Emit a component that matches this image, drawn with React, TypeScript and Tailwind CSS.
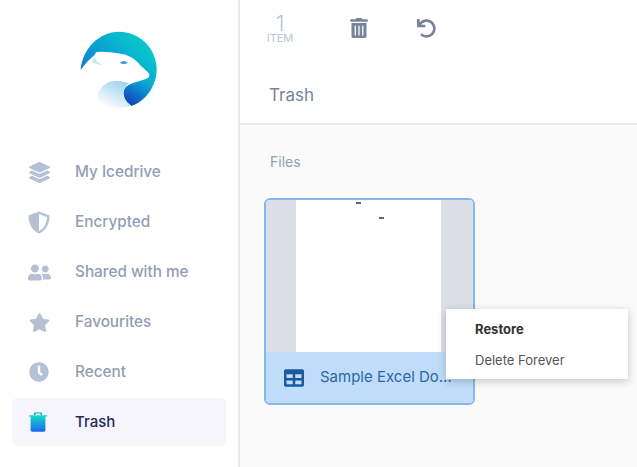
import { FaLayerGroup, FaStar, FaClock, FaTrashAlt, FaUndo, FaTable, FaUserFriends } from "react-icons/fa";

function Logo() {
  return (
    <svg width="120" height="110" viewBox="0 0 360 330">
      <defs>
        <linearGradient id="ring" x1="0.88" y1="0.12" x2="0.12" y2="0.88">
          <stop offset="0" stopColor="#06cdca" />
          <stop offset="0.5" stopColor="#0c9fd4" />
          <stop offset="1" stopColor="#1464cc" />
        </linearGradient>
        <linearGradient id="belly" x1="0.75" y1="0.05" x2="0.15" y2="0.95">
          <stop offset="0" stopColor="#9ed4ee" />
          <stop offset="1" stopColor="#ffffff" />
        </linearGradient>
        <linearGradient id="tail" x1="0.85" y1="0.1" x2="0.25" y2="0.85">
          <stop offset="0" stopColor="#0f6fd0" stopOpacity="0" />
          <stop offset="1" stopColor="#0f50bd" />
        </linearGradient>
      </defs>
      <path
        d="M62 166 C66 100 120 50 176 50 C240 50 290 100 290 163 C290 215 255 260 215 272 C195 262 185 235 195 220 C205 205 240 200 262 190 C270 185 270 175 262 170 L240 150 C225 130 205 122 190 118 C160 112 125 108 108 112 C105 125 85 130 62 166 Z"
        fill="url(#ring)"
      />
      <path d="M215 272 C195 262 185 235 195 220 C200 212 210 207 222 203 C250 205 272 200 282 200 C270 235 245 262 215 272 Z" fill="url(#tail)" />
      <path d="M112 255 C112 225 130 200 165 198 C180 197 195 200 208 205 C195 212 188 225 190 240 C192 255 203 267 215 272 C195 278 175 279 155 276 C135 272 120 265 112 255 Z" fill="url(#belly)" />
      <path d="M104 126 C108 138 116 146 128 148 C116 150 104 146 96 140 Z" fill="#c4e6f5" />
      <path d="M180 143 C186 137 198 137 203 144 C196 148 186 148 180 143 Z" fill="#3f9be2" />
    </svg>
  );
}

function ShieldIcon() {
  return (
    <svg width="22" height="23" viewBox="0 0 22 23">
      <path d="M11 0.5 L21.5 4.5 C21.5 13 18 19.5 11 22.5 C4 19.5 0.5 13 0.5 4.5 Z" fill="#b4c0d4" />
      <path d="M11 3 L19 6 C18.8 12.5 16 17.5 11 20 Z" fill="#ffffff" />
    </svg>
  );
}

function TrashGradient() {
  return (
    <svg width="18" height="20" viewBox="0 0 18 20">
      <defs>
        <linearGradient id="bin" x1="0" y1="0" x2="0" y2="1">
          <stop offset="0" stopColor="#18dcc8" />
          <stop offset="1" stopColor="#1a66ee" />
        </linearGradient>
      </defs>
      <path d="M5 3 V1.6 C5 0.8 5.6 0.3 6.3 0.3 H11.7 C12.4 0.3 13 0.8 13 1.6 V3 H11.6 V1.6 H6.4 V3 Z" fill="url(#bin)" />
      <path d="M0 3.2 H18 V4.6 H16.4 V18 C16.4 19 15.6 19.8 14.6 19.8 H3.4 C2.4 19.8 1.6 19 1.6 18 V4.6 H0 Z" fill="url(#bin)" />
    </svg>
  );
}

const navItems = [
  { label: "My Icedrive", icon: <FaLayerGroup size={21} /> },
  { label: "Encrypted", icon: <ShieldIcon /> },
  { label: "Shared with me", icon: <FaUserFriends size={23} /> },
  { label: "Favourites", icon: <FaStar size={21} /> },
  { label: "Recent", icon: <FaClock size={20} /> },
];

export default function App() {
  return (
    <div className="flex h-[467px] w-[637px] overflow-hidden bg-[#fafafa] font-['Inter','Noto_Sans',sans-serif]">
      {/* sidebar */}
      <aside className="flex w-[240px] shrink-0 flex-col border-r-2 border-[#e8e8ef] bg-white">
        <div className="flex h-[148px] justify-center pl-[2px] pt-[15px]">
          <Logo />
        </div>
        <nav className="flex flex-col gap-[2px] pl-[12px] pr-[12px]">
          {navItems.map((item) => (
            <div key={item.label} className="flex h-[48px] items-center text-[15.3px] font-medium text-[#929eb5]">
              <span className="flex w-[56px] justify-center pr-[2px] text-[#b4c0d4]">{item.icon}</span>
              <span className="pl-[7px]">{item.label}</span>
            </div>
          ))}
          <div className="flex h-[48px] items-center rounded-[6px] bg-[#f5f5fb] text-[15px] font-medium text-[#232a5c]">
            <span className="flex w-[56px] justify-center pr-[4px]">
              <TrashGradient />
            </span>
            <span className="pl-[7px]">Trash</span>
          </div>
        </nav>
      </aside>

      {/* main */}
      <main className="flex min-w-0 flex-1 flex-col">
        <header className="h-[125px] shrink-0 border-b-2 border-[#e8e8ef] bg-white">
          <div className="flex h-[56px] items-center text-[#76849c]">
            <div className="flex w-[80px] flex-col items-center text-[#b9c6d9]">
              <span className="text-[22px] font-light leading-[20px]">1</span>
              <span className="text-[11px] leading-[11px]">ITEM</span>
            </div>
            <span className="ml-[29px] flex w-[20px] justify-center">
              <FaTrashAlt size={20} />
            </span>
            <span className="ml-[47px] flex w-[20px] justify-center">
              <FaUndo size={19} />
            </span>
          </div>
          <div className="mt-[27px] pl-[29px] text-[17px] leading-[24px] text-[#76849c]">Trash</div>
        </header>

        <section className="relative flex-1 pl-[24px] pr-[24px] pt-[28px]">
          <div className="pl-[6px] text-[14px] leading-[18px] text-[#929eb5]">Files</div>
          <div className="mt-[27px] w-[211px] overflow-hidden rounded-[6px] border-2 border-[#85b8e9]">
            <div className="flex h-[152px] bg-[#dcdfe8] pl-[30px]">
              <div className="relative h-full w-[145px] bg-white">
                <span className="absolute left-[60px] top-[2px] h-[2px] w-[5px] bg-[#666666]" />
                <span className="absolute left-[83px] top-[17px] h-[2px] w-[5px] bg-[#666666]" />
              </div>
            </div>
            <div className="flex h-[51px] items-center bg-[#bfddf8] pl-[18px] text-[15px] text-[#2a67a6]">
              <FaTable size={20} className="text-[#1a5a9e]" />
              <span className="ml-[16px] w-[135px] truncate">Sample Excel Document.xlsx</span>
            </div>
          </div>

          {/* context menu */}
          <div className="absolute left-[206px] top-[184px] flex h-[70px] w-[182px] flex-col bg-white pl-[29px] pt-[11px] text-[13px] text-[#555555] shadow-[0_2px_8px_rgba(0,0,0,0.22)]">
            <span className="h-[31px] font-bold leading-[18px] text-[#333333]">Restore</span>
            <span className="leading-[18px]">Delete Forever</span>
          </div>
        </section>
      </main>
    </div>
  );
}
